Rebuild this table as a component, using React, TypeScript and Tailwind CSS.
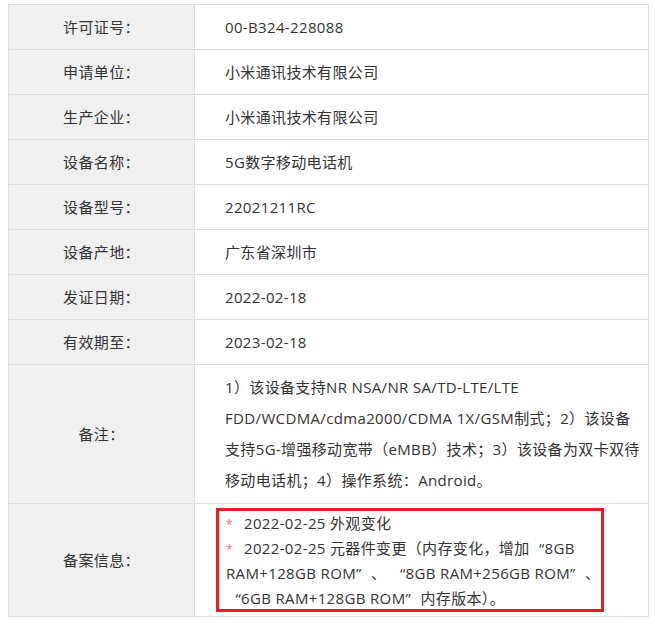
import React from 'react';

// Tablica s podacima o licenci uređaja
const rows: [string, string][] = [
  ['许可证号：', '00-B324-228088'],
  ['申请单位：', '小米通讯技术有限公司'],
  ['生产企业：', '小米通讯技术有限公司'],
  ['设备名称：', '5G数字移动电话机'],
  ['设备型号：', '22021211RC'],
  ['设备产地：', '广东省深圳市'],
  ['发证日期：', '2022-02-18'],
  ['有效期至：', '2023-02-18'],
];

// puni (full-width) navodnici kao u originalu
const Open = () => <span className="inline-block w-[15px] text-right leading-none">“</span>;
const Close = () => <span className="inline-block w-[15px] text-left leading-none">”</span>;

const App: React.FC = () => {
  return (
    <div
      className="min-h-[628px] bg-white pt-[4px] pl-[8px] text-[15px] text-[#333] tracking-[0.35px]"
      style={{ fontFamily: '"Open Sans", "Noto Sans CJK SC", sans-serif' }}
    >
      <table className="w-[641px] border-collapse table-fixed">
        <colgroup>
          <col className="w-[186px]" />
          <col />
        </colgroup>
        <tbody>
          {rows.map(([label, value]) => (
            <tr key={label} className="h-[45px]">
              <td className="border border-[#dddddd] bg-[#f0f0f0] text-center">{label}</td>
              <td className="border border-[#dddddd] pl-[30px]">{value}</td>
            </tr>
          ))}
          <tr>
            <td className="border border-[#dddddd] bg-[#f0f0f0] text-center">备注：</td>
            <td className="border border-[#dddddd] pl-[30px] pr-1 py-[7px] leading-[31px] whitespace-nowrap">
              1）该设备支持NR NSA/NR SA/TD-LTE/LTE
              <br />
              FDD/WCDMA/cdma2000/CDMA 1X/GSM制式；2）该设备
              <br />
              支持5G-增强移动宽带（eMBB）技术；3）该设备为双卡双待
              <br />
              移动电话机；4）操作系统：Android。
            </td>
          </tr>
          <tr>
            <td className="border border-[#dddddd] bg-[#f0f0f0] text-center">备案信息：</td>
            <td className="border border-[#dddddd] pl-[21px] pt-[4px] pb-[4px]">
              <div className="w-[388px] border-[3px] border-[#ed1c24] pl-[7px] leading-[25px] whitespace-nowrap">
                <div className="h-[25px]">
                  <span className="text-[12px] text-[#f56c6c] mr-[11px]">*</span>
                  2022-02-25 外观变化
                </div>
                <div className="h-[25px]">
                  <span className="text-[12px] text-[#f56c6c] mr-[11px]">*</span>
                  2022-02-25 元器件变更（内存变化，增加<Open />8GB
                </div>
                <div className="h-[25px]">
                  RAM+128GB ROM<Close />、 <Open />8GB RAM+256GB ROM<Close />、
                </div>
                <div className="h-[23px]">
                  <Open />6GB RAM+128GB ROM<Close />内存版本）。
                </div>
              </div>
            </td>
          </tr>
        </tbody>
      </table>
    </div>
  );
};

export default App;
